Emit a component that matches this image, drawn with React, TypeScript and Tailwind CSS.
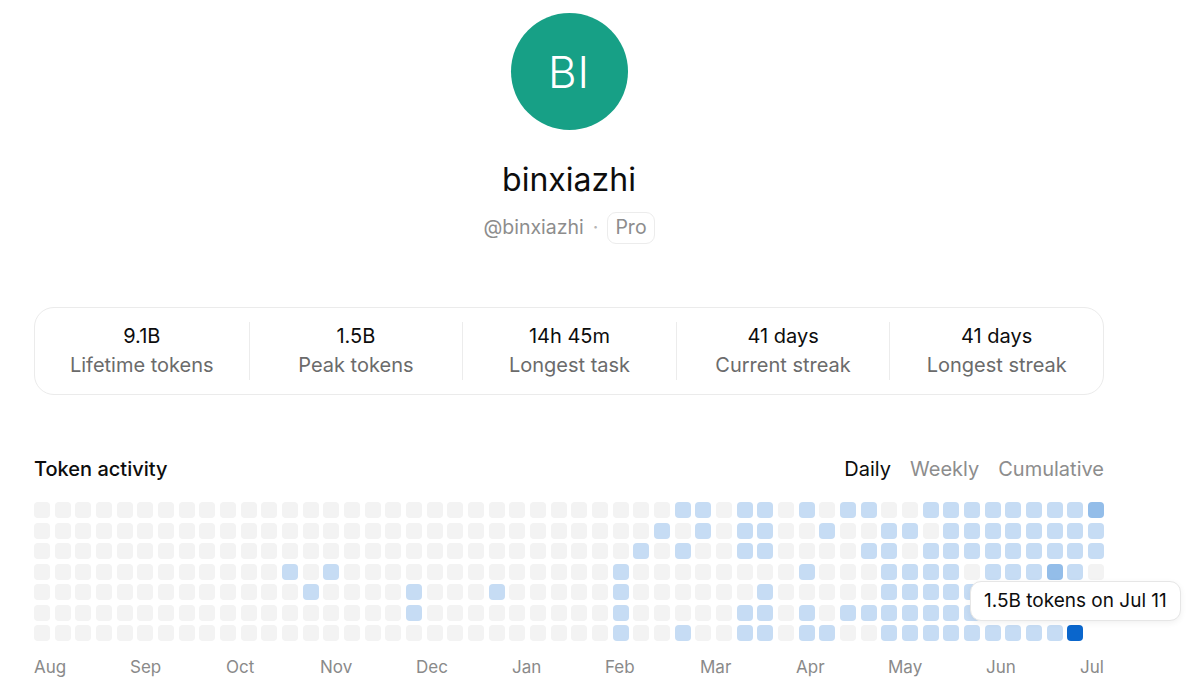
import React from "react";

type Level = 0 | 1 | 2 | 3 | -1;

const WEEKS = 52;

// Weeks (column indices) with a light-blue day, one list per weekday row.
const active: number[][] = [
  [31, 32, 34, 35, 37, 39, 40, 43, 44, 45, 46, 47, 48, 49, 50],
  [30, 32, 34, 35, 38, 41, 42, 44, 45, 46, 47, 48, 49, 50, 51],
  [29, 31, 34, 35, 40, 41, 43, 44, 45, 46, 47, 48, 49, 50, 51],
  [12, 14, 28, 37, 41, 42, 43, 44, 46, 47, 48, 50],
  [13, 18, 22, 28, 35, 41, 42, 43, 44, 45, 46, 47, 48, 49, 50, 51],
  [18, 28, 34, 35, 37, 39, 40, 41, 42, 43, 44, 45, 46, 47, 48, 49, 50, 51],
  [28, 31, 34, 35, 37, 38, 41, 42, 43, 44, 45, 46, 47, 48, 49],
];

function buildGrid(): Level[][] {
  const grid: Level[][] = active.map((cols) => {
    const row: Level[] = Array(WEEKS).fill(0);
    cols.forEach((c) => (row[c] = 1));
    return row;
  });
  grid[0][51] = 2;
  grid[3][49] = 2;
  grid[6][50] = 3;
  grid[6][51] = -1; // future day
  return grid;
}

const levelClass: Record<number, string> = {
  0: "bg-[#f3f3f3]",
  1: "bg-[#c6dcf4]",
  2: "bg-[#93bde9]",
  3: "bg-[#0a66cc]",
  [-1]: "bg-transparent",
};

const stats = [
  { value: "9.1B", label: "Lifetime tokens" },
  { value: "1.5B", label: "Peak tokens" },
  { value: "14h 45m", label: "Longest task" },
  { value: "41 days", label: "Current streak" },
  { value: "41 days", label: "Longest streak" },
];

const months = [
  { name: "Aug", w: "w-[96px]" },
  { name: "Sep", w: "w-[96px]" },
  { name: "Oct", w: "w-[94px]" },
  { name: "Nov", w: "w-[96px]" },
  { name: "Dec", w: "w-[96px]" },
  { name: "Jan", w: "w-[93px]" },
  { name: "Feb", w: "w-[95px]" },
  { name: "Mar", w: "w-[96px]" },
  { name: "Apr", w: "w-[92px]" },
  { name: "May", w: "w-[98px]" },
  { name: "Jun", w: "w-[94px]" },
  { name: "Jul", w: "w-auto" },
];

export default function App() {
  const grid = buildGrid();
  const cells: { key: string; level: Level }[] = [];
  for (let c = 0; c < WEEKS; c++) {
    for (let r = 0; r < 7; r++) {
      cells.push({ key: `${c}-${r}`, level: grid[r][c] });
    }
  }

  return (
    <div
      className="h-[699px] w-full overflow-hidden bg-white text-[#0d0d0d]"
      style={{ fontFamily: "Inter, 'Noto Sans', sans-serif" }}
    >
      <div className="ml-[34px] flex w-[1070px] flex-col items-center pt-[13px]">
        {/* avatar */}
        <div className="flex h-[117px] w-[117px] items-center justify-center rounded-full bg-[#17a086] text-[44px] font-light tracking-[1px] text-white">
          BI
        </div>

        <div className="mt-[30px] text-[32px] leading-[40px] text-[#0d0d0d]">binxiazhi</div>

        <div className="mt-[12px] flex h-[32px] items-center text-[19.5px] text-[#8d8d8d]">
          <span>@binxiazhi</span>
          <span className="mx-[9px] text-[#b5b5b5]">·</span>
          <span className="flex h-[32px] items-center rounded-[9px] border border-[#ececec] px-[7px]">
            Pro
          </span>
        </div>

        {/* stats */}
        <div className="mt-[63px] grid w-full grid-cols-5 rounded-[20px] border border-[#ebebeb] py-[14px]">
          {stats.map((s, i) => (
            <div
              key={s.label}
              className={`flex flex-col items-center ${i > 0 ? "border-l border-[#ececec]" : ""}`}
            >
              <span className="text-[20px] leading-[29px] text-[#0d0d0d]">{s.value}</span>
              <span className="text-[20px] leading-[29px] text-[#6b6b6b]">{s.label}</span>
            </div>
          ))}
        </div>

        {/* activity */}
        <div className="mt-[60px] flex h-[28px] w-full items-center justify-between text-[20px]">
          <span className="font-medium text-[#0d0d0d]">Token activity</span>
          <div className="flex gap-[19px]">
            <span className="text-[#0d0d0d]">Daily</span>
            <span className="text-[#8d8d8d]">Weekly</span>
            <span className="text-[#8d8d8d]">Cumulative</span>
          </div>
        </div>

        <div className="relative mt-[19px] w-full">
          <div className="grid grid-flow-col grid-cols-[repeat(52,minmax(0,1fr))] grid-rows-[repeat(7,16px)] gap-x-[4.67px] gap-y-[4.5px]">
            {cells.map((cell) => (
              <div key={cell.key} className={`rounded-[4px] ${levelClass[cell.level]}`} />
            ))}
          </div>

          {/* hover tooltip */}
          <div className="absolute left-[936px] top-[79px] flex h-[40px] items-center whitespace-nowrap rounded-[11px] border border-[#e6e6e6] bg-white px-[13px] text-[19px] text-[#0d0d0d] shadow-[0_2px_6px_rgba(0,0,0,0.06)]">
            1.5B tokens on Jul 11
          </div>
        </div>

        <div className="mt-[15px] flex h-[24px] w-full items-center text-[17px] text-[#8a8a8a]">
          {months.map((m) => (
            <span key={m.name} className={`shrink-0 ${m.w}`}>
              {m.name}
            </span>
          ))}
        </div>
      </div>
    </div>
  );
}
